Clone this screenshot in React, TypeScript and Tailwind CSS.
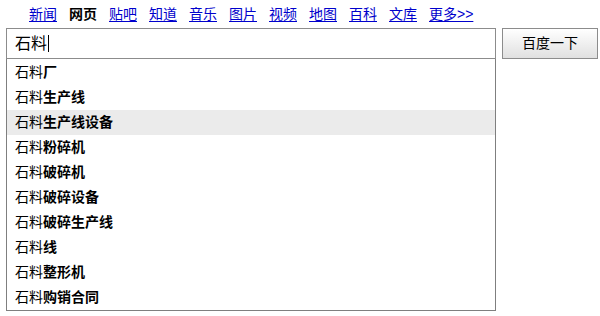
import React from 'react';

const navItems = ['新闻', '网页', '贴吧', '知道', '音乐', '图片', '视频', '地图', '百科', '文库', '更多>>'];

const suggestions = [
  '厂',
  '生产线',
  '生产线设备',
  '粉碎机',
  '破碎机',
  '破碎设备',
  '破碎生产线',
  '线',
  '整形机',
  '购销合同',
];

export default function App() {
  return (
    <div
      className="w-[600px] h-[316px] bg-white text-black"
      style={{ fontFamily: '"Liberation Sans", "Noto Sans CJK SC", sans-serif' }}
    >
      {/* 顶部导航 */}
      <div className="flex h-[28px] items-center gap-[12px] pl-[29px] text-[14px] leading-none">
        {navItems.map((item) =>
          item === '网页' ? (
            <span key={item} className="font-bold">
              {item}
            </span>
          ) : (
            <a key={item} href="#" className="text-[#0000cc] underline underline-offset-2">
              {item}
            </a>
          ),
        )}
      </div>

      <div className="flex items-start pl-[6px]">
        <div className="w-[490px]">
          {/* 搜索框 */}
          <div className="flex h-[31px] items-center border border-[#8c8c8c] bg-white pl-[8px] text-[16px]">
            <span>石料</span>
            <span className="ml-[1px] inline-block h-[17px] w-px bg-black" />
          </div>

          {/* 下拉提示 */}
          <ul className="border-x border-b border-[#7f7f7f] bg-white pt-[1px] text-[14px]">
            {suggestions.map((s, i) => (
              <li
                key={s}
                className={`flex h-[25px] items-center pl-[8px] ${i === 2 ? 'bg-[#ebebeb]' : ''}`}
              >
                石料<b className="font-bold">{s}</b>
              </li>
            ))}
          </ul>
        </div>

        <button className="ml-[6px] h-[31px] w-[96px] border border-[#8c8c8c] bg-gradient-to-b from-white to-[#e0e0e0] text-[14px] text-black">
          百度一下
        </button>
      </div>
    </div>
  );
}
